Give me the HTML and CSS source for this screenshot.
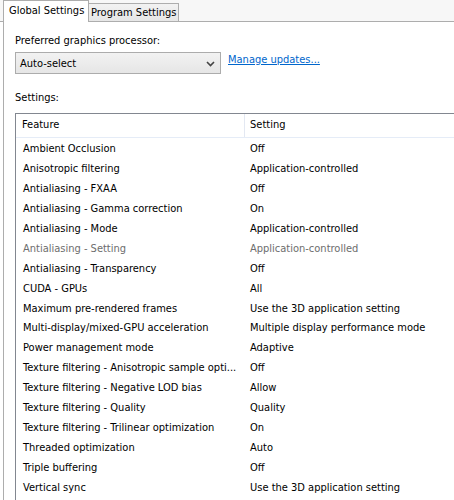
FILE: index.html
```html
<!DOCTYPE html>
<html>
<head>
<meta charset="utf-8">
<link rel="stylesheet" href="styles.css">
</head>
<body>
<div class="tabs">
  <div class="tab active">Global Settings</div>
  <div class="tab">Program Settings</div>
</div>
<div class="panel">
  <div class="label first">Preferred graphics processor:</div>
  <div class="gpu-row">
    <div class="select"><span>Auto-select</span>
      <svg class="chev" width="9" height="6" viewBox="0 0 9 6"><path d="M1 1 L4.5 4.5 L8 1" fill="none" stroke="#444" stroke-width="1.6"/></svg>
    </div>
    <a class="link" href="#">Manage updates...</a>
  </div>
  <div class="label settings">Settings:</div>
  <div class="list">
    <div class="head">
      <div class="c1">Feature</div>
      <div class="c2">Setting</div>
    </div>
    <div class="rows">
      <div class="row"><div class="c1">Ambient Occlusion</div><div class="c2">Off</div></div>
      <div class="row"><div class="c1">Anisotropic filtering</div><div class="c2">Application-controlled</div></div>
      <div class="row"><div class="c1">Antialiasing - FXAA</div><div class="c2">Off</div></div>
      <div class="row"><div class="c1">Antialiasing - Gamma correction</div><div class="c2">On</div></div>
      <div class="row"><div class="c1">Antialiasing - Mode</div><div class="c2">Application-controlled</div></div>
      <div class="row disabled"><div class="c1">Antialiasing - Setting</div><div class="c2">Application-controlled</div></div>
      <div class="row"><div class="c1">Antialiasing - Transparency</div><div class="c2">Off</div></div>
      <div class="row"><div class="c1">CUDA - GPUs</div><div class="c2">All</div></div>
      <div class="row"><div class="c1">Maximum pre-rendered frames</div><div class="c2">Use the 3D application setting</div></div>
      <div class="row"><div class="c1">Multi-display/mixed-GPU acceleration</div><div class="c2">Multiple display performance mode</div></div>
      <div class="row"><div class="c1">Power management mode</div><div class="c2">Adaptive</div></div>
      <div class="row"><div class="c1">Texture filtering - Anisotropic sample opti...</div><div class="c2">Off</div></div>
      <div class="row"><div class="c1">Texture filtering - Negative LOD bias</div><div class="c2">Allow</div></div>
      <div class="row"><div class="c1">Texture filtering - Quality</div><div class="c2">Quality</div></div>
      <div class="row"><div class="c1">Texture filtering - Trilinear optimization</div><div class="c2">On</div></div>
      <div class="row"><div class="c1">Threaded optimization</div><div class="c2">Auto</div></div>
      <div class="row"><div class="c1">Triple buffering</div><div class="c2">Off</div></div>
      <div class="row"><div class="c1">Vertical sync</div><div class="c2">Use the 3D application setting</div></div>
    </div>
  </div>
</div>
</body>
</html>
```
FILE: styles.css
```css
html, body {
  margin: 0;
  padding: 0;
  background: #ffffff;
  overflow: hidden;
}
body {
  width: 454px;
  height: 500px;
  font-family: "DejaVu Sans Condensed", "DejaVu Sans", sans-serif;
  font-size: 11px;
  color: #000;
}
.tabs {
  display: flex;
  align-items: flex-end;
  height: 21px;
  padding-left: 3px;
  border-bottom: 1px solid #adadad;
  background: #f7f7f7;
}
.tab {
  box-sizing: border-box;
  height: 18px;
  line-height: 17px;
  white-space: nowrap;
  border: 1px solid #adadad;
  border-bottom: none;
  border-left: none;
  background: linear-gradient(#f2f2f2, #e6e6e6);
}
.tab.active {
  height: 22px;
  margin-bottom: -1px;
  padding: 0 5px;
  line-height: 20px;
  background: #fff;
  border-left: 1px solid #adadad;
  width: 86px;
}
.tab:not(.active) {
  width: 90px;
  padding: 0 2px;
}
.panel {
  margin-left: 3px;
  border-left: 1px solid #adadad;
  padding-left: 11px;
  height: 478px;
}
.label {
  line-height: 14px;
}
.label.first {
  padding-top: 12px;
}
.gpu-row {
  display: flex;
  align-items: flex-start;
  margin-top: 4px;
}
.select {
  box-sizing: border-box;
  width: 206px;
  height: 22px;
  border: 1px solid #acacac;
  background: linear-gradient(#f2f2f2, #e6e6e6);
  display: flex;
  align-items: center;
  justify-content: space-between;
  padding: 0 5px 0 4px;
}
.chev { margin-top: 2px; }
.link {
  color: #0066cc;
  text-decoration: underline;
  margin-left: 7px;
  margin-top: 1px;
  white-space: nowrap;
}
.label.settings {
  margin-top: 17px;
}
.list {
  margin-top: 8px;
  border: 1px solid #828790;
  border-right: none;
  height: 400px;
}
.head {
  display: flex;
  height: 23px;
  line-height: 22px;
  border-bottom: 1px solid #e5ecf7;
}
.head .c1 {
  box-sizing: border-box;
  width: 229px;
  padding-left: 6px;
  border-right: 1px solid #e3e8f2;
}
.head .c2 {
  padding-left: 5px;
}
.rows {
  padding-top: 1px;
}
.row {
  display: flex;
  height: 19.95px;
  line-height: 20px;
}
.row .c1 {
  width: 228px;
  padding-left: 7px;
  box-sizing: border-box;
  white-space: nowrap;
}
.row .c2 {
  padding-left: 6px;
  white-space: nowrap;
}
.row.disabled {
  color: #6d6d6d;
}
```
